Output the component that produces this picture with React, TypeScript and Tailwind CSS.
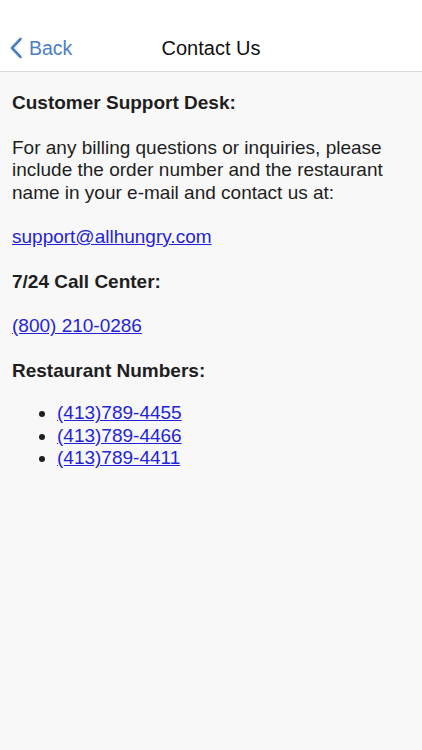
import React from "react";

export default function App() {
  const font = { fontFamily: '"Liberation Sans", Arial, sans-serif' };
  return (
    <div className="w-[422px] h-[750px] bg-[#f8f8f8] flex flex-col" style={font}>
      <div className="h-[72px] bg-white border-b border-[#dcdcdc] flex items-end shrink-0">
        <div className="relative w-full h-[46px] flex items-start justify-center">
          <div className="absolute left-[9px] top-[11px] flex items-center gap-[6px] text-[#4a80c4]">
            <svg width="14" height="22" viewBox="0 0 14 22" fill="none">
              <path d="M11.5 2 L3 11 L11.5 20" stroke="#4a80c4" strokeWidth="2.6" strokeLinecap="round" strokeLinejoin="round" />
            </svg>
            <span className="text-[19.5px] leading-[24px]">Back</span>
          </div>
          <span className="text-[20px] leading-[24px] mt-[11px] text-[#111]">Contact Us</span>
        </div>
      </div>
      <div className="px-[12px] pt-[20px] flex flex-col gap-[22px] text-[19px] leading-[22.5px] text-[#1e1e1e]">
        <div className="font-bold">Customer Support Desk:</div>
        <div>
          For any billing questions or inquiries, please include the order number and the restaurant name in your e-mail and contact us at:
        </div>
        <a className="text-[#2424d6] underline w-fit">support@allhungry.com</a>
        <div className="font-bold">7/24 Call Center:</div>
        <a className="text-[#2424d6] underline w-fit">(800) 210-0286</a>
        <div className="font-bold">Restaurant Numbers:</div>
        <ul className="flex flex-col pl-[45px] list-disc -mt-[2px]">
          <li><a className="text-[#2424d6] underline">(413)789-4455</a></li>
          <li><a className="text-[#2424d6] underline">(413)789-4466</a></li>
          <li><a className="text-[#2424d6] underline">(413)789-4411</a></li>
        </ul>
      </div>
    </div>
  );
}
